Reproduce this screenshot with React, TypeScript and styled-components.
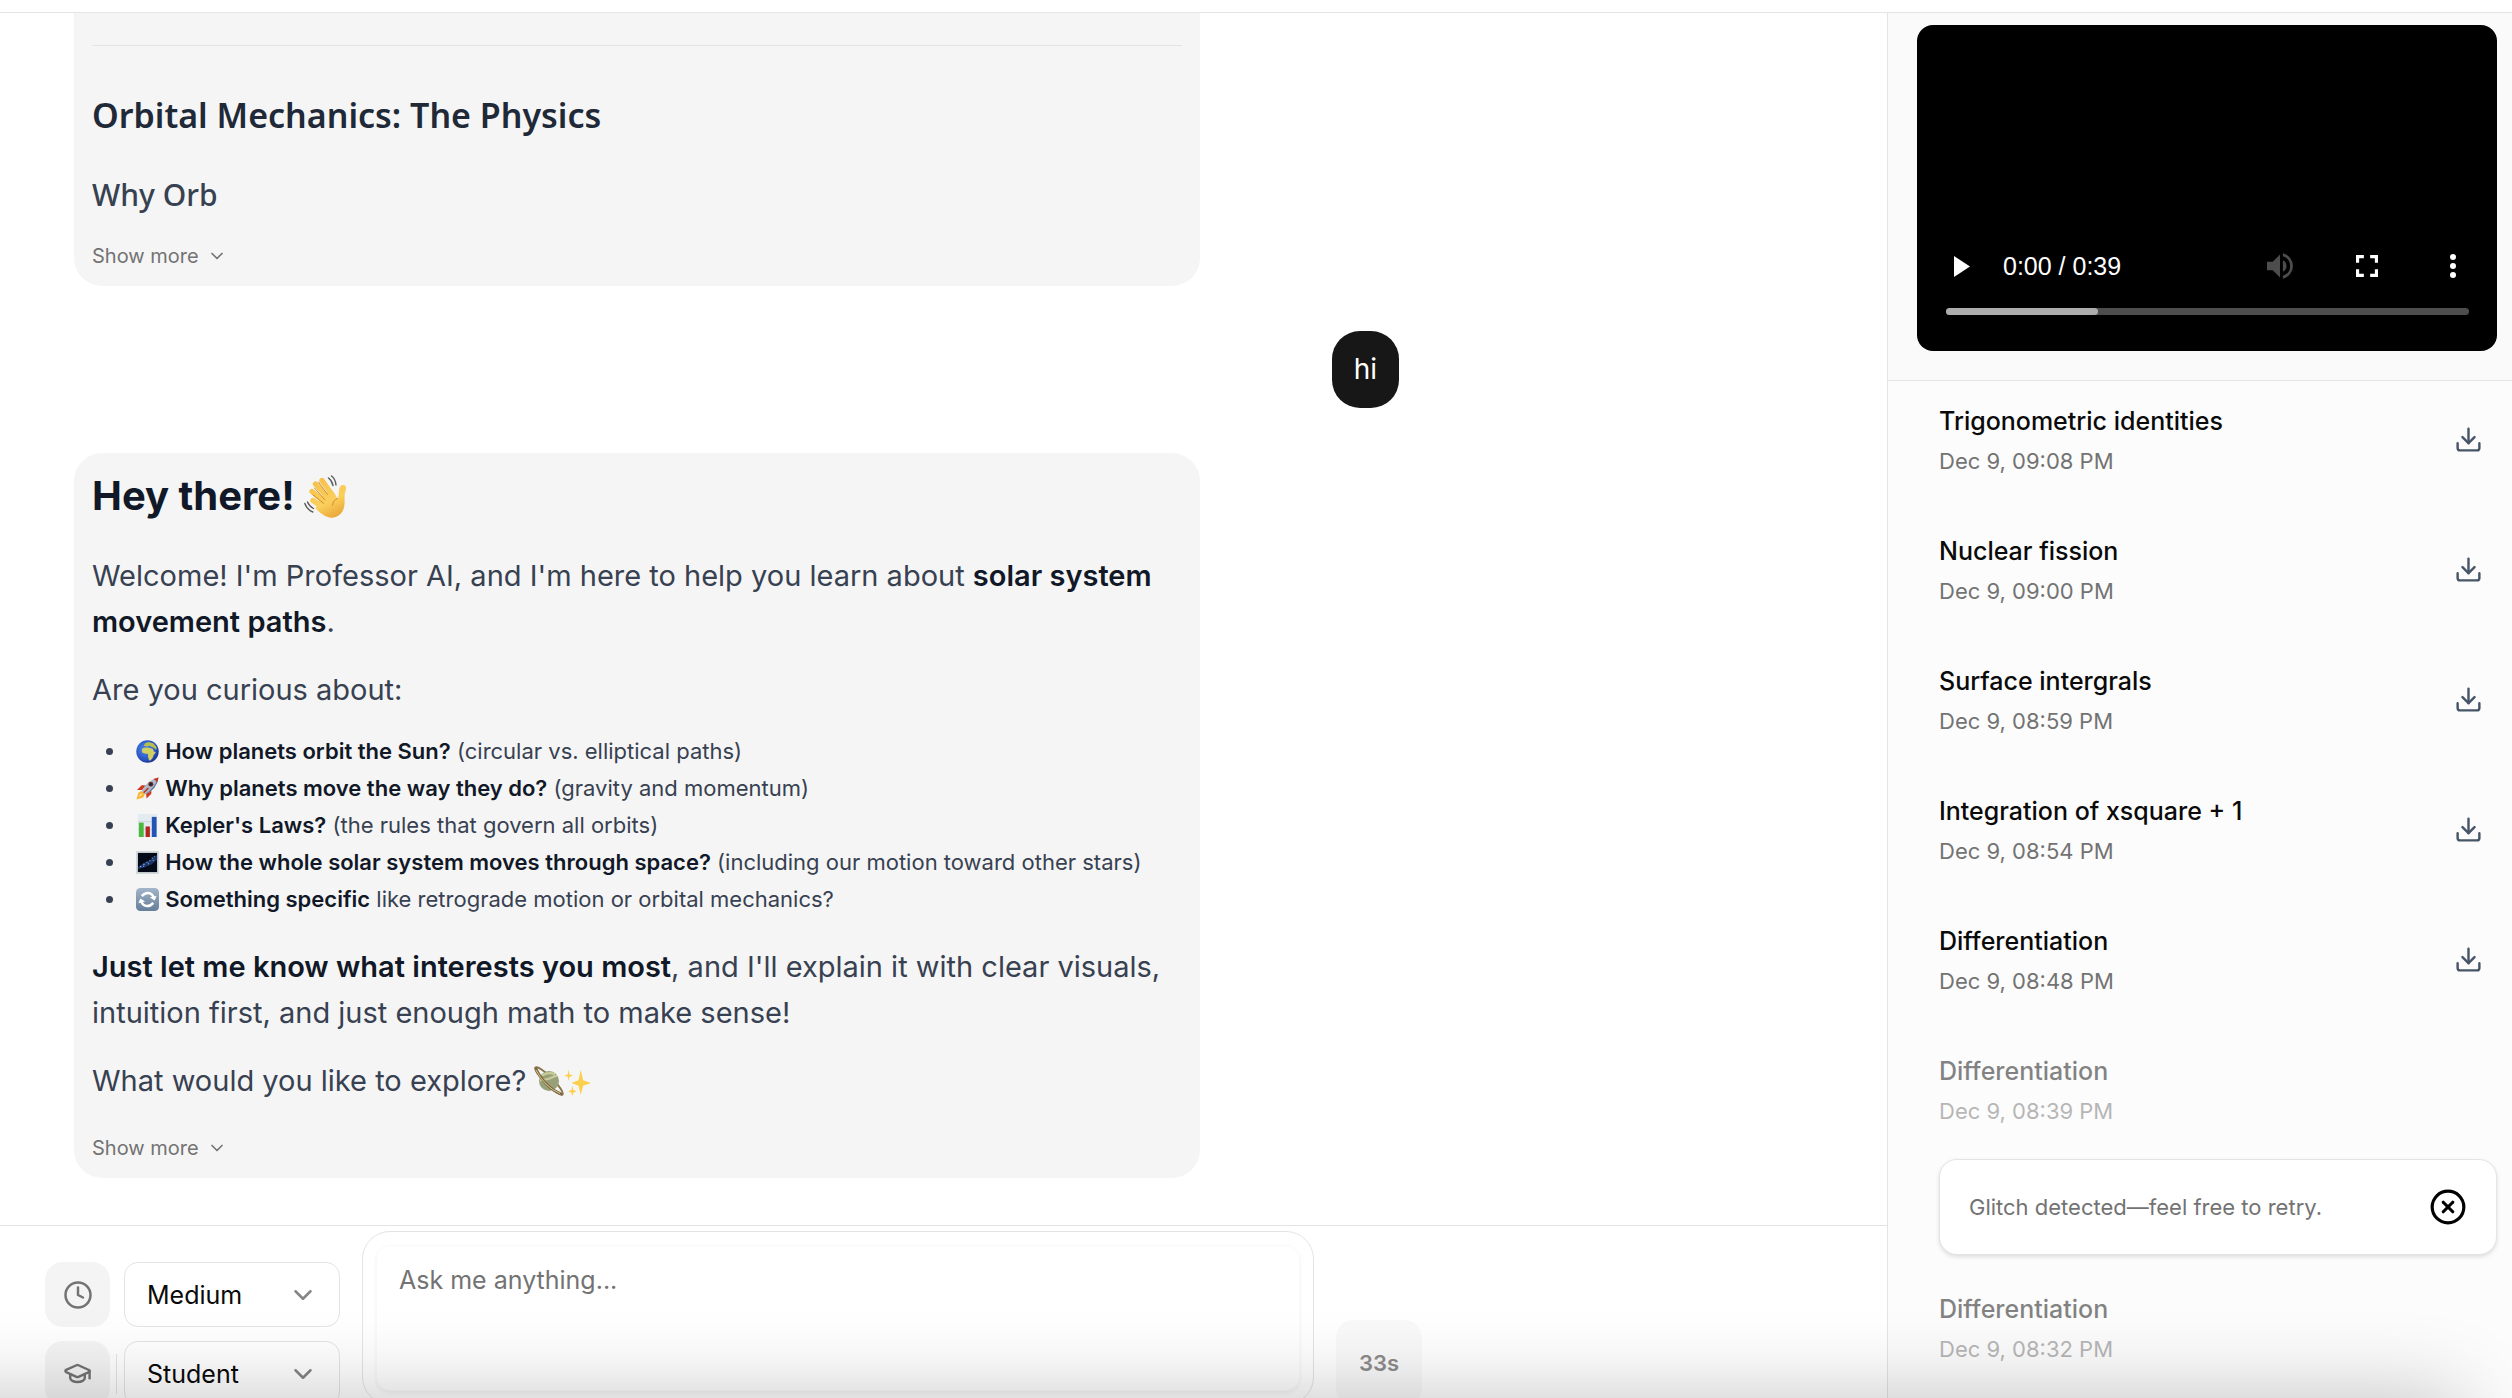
import React from "react";
import styled, { createGlobalStyle } from "styled-components";
import { ChevronDown, CircleX, Clock, Download, GraduationCap } from "lucide-react";

const Global = createGlobalStyle`
  *, *::before, *::after { box-sizing: border-box; }
  body { margin: 0; background: #fff; font-family: Inter, "Liberation Sans", sans-serif; color: #0a0a0a; }
  h1, h2, h3, p, ul { margin: 0; padding: 0; }
  button, select, textarea { font: inherit; }
`;

const Page = styled.div`
  height: 100vh;
  overflow: hidden;
  display: flex;
  flex-direction: column;
`;
const TopBar = styled.header`
  flex: none;
  height: 13px;
  border-bottom: 1px solid #e4e4e4;
`;
const Body = styled.div`
  flex: 1;
  min-height: 0;
  display: flex;
`;
const Main = styled.main`
  flex: 1;
  min-width: 0;
  display: flex;
  flex-direction: column;
`;
const Thread = styled.section`
  flex: 1;
  min-height: 0;
  overflow: hidden;
  display: flex;
  flex-direction: column;
  justify-content: flex-end;
  gap: 45px;
  max-width: 1399px;
  padding: 0 0 47px 74px;
`;
const Answer = styled.article`
  flex: none;
  align-self: flex-start;
  width: 85%;
  padding: 12px 18px 10px;
  border-radius: 28px;
  background: #f5f5f5;
  color: #374151;
`;
const Question = styled.p`
  flex: none;
  align-self: flex-end;
  padding: 16px 22px;
  border-radius: 28px;
  background: #171717;
  color: #fff;
  font-size: 28px;
  line-height: 45px;
`;
const Rule = styled.hr`
  margin: 46px 0;
  border: 0;
  border-top: 1px solid #e4e4e4;
`;
const Title = styled.h1`
  margin-bottom: 26px;
  font-size: 40px;
  line-height: 62px;
  font-weight: 700;
  color: #111827;
`;
const Heading = styled.h2`
  font-family: "Noto Sans", Inter, sans-serif;
  font-size: 34px;
  line-height: 46px;
  font-weight: 600;
  color: #1f2937;
`;
const SubHeading = styled.h3`
  margin-top: 40px;
  font-family: "Noto Sans", Inter, sans-serif;
  font-size: 30px;
  line-height: 34px;
  font-weight: 500;
  color: #374151;
`;
const Text = styled.p`
  font-size: 29px;
  line-height: 46px;
  & + & { margin-top: 22px; }
`;
const Strong = styled.strong`
  font-weight: 600;
  color: #111827;
`;
const Topics = styled.ul`
  margin: 20px 0 26px;
  padding-left: 35px;
  font-size: 22px;
  line-height: 37px;
  & > li { padding-left: 9px; }
`;
const ShowMore = styled.button`
  display: flex;
  align-items: center;
  gap: 8px;
  margin-top: 24px;
  padding: 0;
  border: 0;
  background: none;
  color: #737373;
  font-size: 20px;
  line-height: 40px;
`;
const Emoji = styled.svg<{ $size: number }>`
  width: ${(p) => p.$size}px;
  height: ${(p) => p.$size}px;
  vertical-align: ${(p) => (p.$size > 40 ? -9 : p.$size > 26 ? -5 : -4)}px;
`;

const Composer = styled.form`
  flex: none;
  height: 173px;
  overflow: hidden;
  display: flex;
  gap: 22px;
  align-items: flex-start;
  border-top: 1px solid #e4e4e4;
  padding: 5px 22px 0 45px;
`;
const Options = styled.div`
  flex: none;
  display: flex;
  flex-direction: column;
  gap: 14px;
  padding-top: 31px;
`;
const Option = styled.div`
  display: flex;
  align-items: center;
  width: 295px;
`;
const OptionIcon = styled.label`
  display: grid;
  place-items: center;
  width: 65px;
  height: 65px;
  border-radius: 18px;
  background: #f4f4f4;
  color: #737373;
`;
const Divider = styled.span<{ $shown: boolean }>`
  width: 1px;
  height: 40px;
  margin: 0 7px 0 6px;
  background: ${(p) => (p.$shown ? "#e4e4e4" : "transparent")};
`;
const SelectBox = styled.div`
  flex: 1;
  display: grid;
  align-items: center;
  & > * { grid-area: 1 / 1; }
  & > svg { justify-self: end; margin-right: 22px; color: #858585; pointer-events: none; }
`;
const Select = styled.select`
  appearance: none;
  width: 100%;
  height: 65px;
  padding: 0 56px 0 22px;
  border: 1px solid #e4e4e4;
  border-radius: 14px;
  background: #fff;
  color: #0a0a0a;
  font-size: 25px;
`;
const PromptFrame = styled.div`
  flex: 1;
  max-width: 952px;
  padding: 13px;
  border: 1px solid #e4e4e4;
  border-radius: 28px;
`;
const Prompt = styled.textarea`
  display: block;
  width: 100%;
  height: 146px;
  padding: 18px 22px;
  border: 1px solid #fafafa;
  border-radius: 14px;
  outline: 0;
  resize: none;
  background: transparent;
  box-shadow: 0 2px 4px rgba(0, 0, 0, 0.05);
  font-size: 25px;
  line-height: 32px;
  color: #0a0a0a;
  &::placeholder { color: #737373; opacity: 1; }
`;
const Wait = styled.button`
  flex: none;
  width: 86px;
  height: 86px;
  margin-top: 89px;
  padding: 0;
  border: 0;
  border-radius: 18px;
  background: #f9f9f9;
  color: #8c8c8c;
  font-size: 22px;
  font-weight: 600;
`;

const Sidebar = styled.aside`
  flex: none;
  width: 625px;
  display: flex;
  flex-direction: column;
  overflow: hidden;
  border-left: 1px solid #e4e4e4;
  background: #fcfcfc;
`;
const PlayerArea = styled.section`
  flex: none;
  padding: 12px 15px 29px 29px;
  border-bottom: 1px solid #e4e4e4;
  background: #fafafa;
`;
const Player = styled.div`
  display: flex;
  flex-direction: column;
  justify-content: flex-end;
  height: 326px;
  padding: 0 28px 36px 29px;
  border-radius: 16px;
  background: #000;
  color: #fff;
`;
const Controls = styled.div`
  display: flex;
  align-items: center;
  height: 52px;
  margin-bottom: 16px;
`;
const Time = styled.span`
  flex: 1;
  margin-left: 25px;
  font-family: "Liberation Sans", sans-serif;
  font-size: 25px;
`;
const PlayerButton = styled.button<{ $gap?: number }>`
  display: grid;
  place-items: center;
  width: 32px;
  height: 48px;
  margin-left: ${(p) => p.$gap || 0}px;
  padding: 0;
  border: 0;
  background: none;
  color: inherit;
`;
const Track = styled.div`
  height: 7px;
  border-radius: 4px;
  background: #4d4d4d;
`;
const Buffered = styled.div`
  width: 29%;
  height: 7px;
  border-radius: 4px;
  background: #adadad;
`;
const History = styled.ul`
  flex: 1;
  min-height: 0;
  overflow: hidden;
  list-style: none;
  && { padding: 20px 15px 0 51px; }
  display: flex;
  flex-direction: column;
  gap: 50px;
`;
const Entry = styled.li<{ $off?: boolean }>`
  flex: none;
  display: flex;
  align-items: center;
  justify-content: space-between;
  opacity: ${(p) => (p.$off ? 0.5 : 1)};
`;
const EntryTitle = styled.h3`
  font-size: 25px;
  line-height: 40px;
  font-weight: 500;
`;
const EntryDate = styled.p`
  font-size: 22px;
  line-height: 40px;
  color: #737373;
`;
const IconButton = styled.button`
  display: grid;
  place-items: center;
  margin-right: 14px;
  padding: 0 0 4px;
  border: 0;
  background: none;
  color: #475569;
`;
const Notice = styled.li`
  flex: none;
  display: flex;
  align-items: center;
  justify-content: space-between;
  height: 96px;
  margin: -22px 0 -16px;
  padding: 0 29px;
  border: 1px solid #e4e4e4;
  border-radius: 18px;
  background: #fff;
  box-shadow: 0 2px 4px rgba(0, 0, 0, 0.12);
  color: #737373;
  font-size: 22px;
`;
const Dismiss = styled.button`
  display: grid;
  padding: 0;
  border: 0;
  background: none;
  color: #000;
`;
const DockShade = styled.div`
  position: fixed;
  top: 100%;
  left: -200px;
  right: 50px;
  height: 300px;
  pointer-events: none;
  box-shadow: 0 0 80px rgba(0, 0, 0, 0.24);
`;

const entries = [
  ["Trigonometric identities", "Dec 9, 09:08 PM"],
  ["Nuclear fission", "Dec 9, 09:00 PM"],
  ["Surface intergrals", "Dec 9, 08:59 PM"],
  ["Integration of xsquare + 1", "Dec 9, 08:54 PM"],
  ["Differentiation", "Dec 9, 08:48 PM"],
];

function More() {
  return <ShowMore type="button">Show more <ChevronDown size={20} strokeWidth={2} /></ShowMore>;
}
function PastEntry({ title, date, off }: { title: string; date: string; off?: boolean }) {
  return (
    <Entry $off={off}>
      <div><EntryTitle>{title}</EntryTitle><EntryDate>{date}</EntryDate></div>
      {!off && <IconButton aria-label={"Download " + title}><Download size={29} strokeWidth={2} /></IconButton>}
    </Entry>
  );
}
const Wave = () => (
  <Emoji $size={44} viewBox="0 0 44 44" role="img" aria-label="waving hand">
    <defs>
      <linearGradient id="skin" gradientUnits="userSpaceOnUse" x1="12" y1="4" x2="32" y2="43">
        <stop offset="0" stopColor="#f6c04a" /><stop offset="0.6" stopColor="#fbcf5c" /><stop offset="1" stopColor="#e9a536" />
      </linearGradient>
    </defs>
    <g fill="none" stroke="url(#skin)" strokeWidth="5.4" strokeLinecap="round">
      <path d="M18 5.500 29 21M11.500 9 25 24M8 16.500 22 28M9 25.500 20 33" />
    </g>
    <path d="M17 22 28 15.500q4 5 5.500 8 1.500-3 1.500-8 .5-5.500 4-5.500 3.500 0 3 4-1.500 4-1.500 10 1 10-4 15-5 4.500-11 3.500-6-1-14-9Z" fill="url(#skin)" />
    <path d="m14.500 7 9 12.500m-13-6.500 10.500 12m-12-5 11 8.500M33.500 23.500q-4.500 1.500-5 6.500" stroke="#d1902c" strokeWidth="1" fill="none" strokeLinecap="round" />
    <g fill="none" stroke="#5c5c5c" strokeWidth="1.4" strokeLinecap="round"><path d="M24.500 3q3.500 2.500 4.500 7.500M27.500 1q4 3 4.500 9M.8 28.500q2 6 8 8.500M3.500 27q1.500 4 6 6.500" /></g>
  </Emoji>
);
const Globe = () => (
  <Emoji $size={23} viewBox="0 0 24 24" role="img" aria-label="globe">
    <defs>
      <radialGradient id="sea" cx="0.4" cy="0.4" r="0.65">
        <stop offset="0" stopColor="#4f8be8" /><stop offset="0.7" stopColor="#2a55c4" /><stop offset="1" stopColor="#1a2f8a" />
      </radialGradient>
    </defs>
    <circle cx="12" cy="12" r="11.700" fill="url(#sea)" />
    <path d="M6 9.500 8.500 8l4-.3 3 1 2 .3 1.200 3 2 .8-2.400 3-1 3-2.300 2.700-1.500-.5-1-4 .2-2.500L9 14l-2.600-1Z" fill="#d0cf62" />
    <path d="m8 6 1.500-2.500L13 2l5 1.500 3.500 4-.5 3-2.500-2.500L16 7l-2-1-2 .7Z" fill="#b7bf4f" />
  </Emoji>
);
const Rocket = () => (
  <Emoji $size={23} viewBox="0 0 24 24" role="img" aria-label="rocket">
    <path d="m.5 23.500 2-7 3-2 4 3-2 4Z" fill="#f9b233" /><path d="m3 21 1.500-3.500L7 18Z" fill="#fff0a0" />
    <path d="M1 13.500 6 8.500l4.500 0-4 5Zm10 9 5-5 0-4.500-5.500 4Z" fill="#d2361f" />
    <path d="M6 14.500Q11 3.500 23.500.5q-2 13-14 17.500Z" fill="#a9bccb" /><path d="M9.500 18Q19 12 23.500.5q-2 13-14 17.500Z" fill="#5f7f9d" />
    <path d="M18 2.200 23.500.5 22 6Q21 3.500 18 2.200Z" fill="#c7321f" /><circle cx="15.500" cy="7.500" r="2.600" fill="#8b2a22" /><circle cx="15.500" cy="7.500" r="1.600" fill="#1d2b40" />
    <path d="m8 16.500 5-5" stroke="#c7321f" strokeWidth="1.600" />
  </Emoji>
);
const Chart = () => (
  <Emoji $size={23} viewBox="0 0 24 24" role="img" aria-label="bar chart">
    <path d="M2 0h20v24H2Z" fill="#e3ebf1" /><path d="M2 8h20M2 16h20" stroke="#c9d6df" strokeWidth="1" />
    <path d="M3 9h5v15H3Z" fill="#4ab838" /><path d="M10 13h4.500v11H10Z" fill="#b3261f" /><path d="M16.500 3h5v21h-5Z" fill="#2455b5" />
  </Emoji>
);
const Galaxy = () => (
  <Emoji $size={23} viewBox="0 0 24 24" role="img" aria-label="milky way">
    <path d="M0 0h24v24H0Z" fill="#d3dadb" /><path d="M2 2h20v20H2Z" fill="#050a18" />
    <path d="M2 17 8 12.500 14 10 22 4v5l-6 5-7 3-7 2Z" fill="#1c3566" />
    <path d="m4 16.500 1.500-.5m2-2 1.500 0m2-2.500 1 .5m2-2 1 0m1.500-2.500 1 0m1-1.500 1 0m-2 4 1-.5m-6 4 1-.5m-6 3 1 0" stroke="#8ea5e6" strokeWidth="1.200" />
  </Emoji>
);
const Refresh = () => (
  <Emoji $size={23} viewBox="0 0 24 24" role="img" aria-label="refresh">
    <defs><linearGradient id="key" x1="0" y1="0" x2="0" y2="1"><stop offset="0" stopColor="#a3b5c9" /><stop offset="1" stopColor="#647d99" /></linearGradient></defs>
    <rect width="24" height="24" rx="4.500" fill="url(#key)" />
    <path d="M6 8.500Q9 5 12.500 5.200 17 5.500 18.500 10M18 15.500Q15 19 11.500 18.800 7 18.500 5.500 14" stroke="#fff" strokeWidth="2.600" fill="none" />
    <path d="m21.500 8-2 5-5-3ZM2.500 16l2-5 5 3Z" fill="#fff" />
  </Emoji>
);
const Saturn = () => (
  <Emoji $size={30} viewBox="0 0 30 30" role="img" aria-label="ringed planet">
    <ellipse cx="15" cy="15" rx="19" ry="4" transform="rotate(45 15 15)" fill="none" stroke="#8a754b" strokeWidth="2" />
    <circle cx="15" cy="15" r="10" fill="#98a07a" /><path d="M8 9.500q7-4 13-1M6 14.500q9-1 17-5" stroke="#c9cb98" strokeWidth="2.200" fill="none" />
    <path d="M1.600 1.600Q5 10 12 17.500T28.400 28.400" fill="none" stroke="#7d6a42" strokeWidth="2.600" /><path d="M2 4Q6 12 12 18t14 9.500" fill="none" stroke="#d8c78f" strokeWidth="1" />
  </Emoji>
);
const Sparkles = () => (
  <Emoji $size={28} viewBox="0 0 30 30" role="img" aria-label="sparkles">
    <path d="m18 2 2.500 11 8.500 3-8.500 3L18 29l-2.500-10L8 16l7.500-3ZM5 2l1 5 4 1-4 1.500L5 14 4 9.500 0 8l4-1Zm4 17 1 4.500 3.500 1.500-3.500 1.500L9 30l-1-3.500L4.500 25 8 23.500Z" fill="#fbd04e" />
  </Emoji>
);

const topics: [React.FC, string, string][] = [
  [Globe, "How planets orbit the Sun?", "(circular vs. elliptical paths)"],
  [Rocket, "Why planets move the way they do?", "(gravity and momentum)"],
  [Chart, "Kepler's Laws?", "(the rules that govern all orbits)"],
  [Galaxy, "How the whole solar system moves through space?", "(including our motion toward other stars)"],
  [Refresh, "Something specific", "like retrograde motion or orbital mechanics?"],
];

export default function App() {
  return (
    <Page>
      <Global />
      <TopBar />
      <Body>
        <Main>
          <Thread>
            <Answer>
              <Rule />
              <Heading>Orbital Mechanics: The Physics</Heading>
              <SubHeading>Why Orb</SubHeading>
              <More />
            </Answer>
            <Question>hi</Question>
            <Answer>
              <Title>Hey there! <Wave /></Title>
              <Text>Welcome! I'm Professor AI, and I'm here to help you learn about <Strong>solar system movement paths</Strong>.</Text>
              <Text>Are you curious about:</Text>
              <Topics>
                {topics.map(([Icon, name, note]) => (
                  <li key={name}><Icon /> <Strong>{name}</Strong> {note}</li>
                ))}
              </Topics>
              <Text><Strong>Just let me know what interests you most</Strong>, and I'll explain it with clear visuals, intuition first, and just enough math to make sense!</Text>
              <Text>What would you like to explore? <Saturn /><Sparkles /></Text>
              <More />
            </Answer>
          </Thread>
          <Composer>
            <Options>
              <Option>
                <OptionIcon htmlFor="length" aria-label="Length"><Clock size={30} /></OptionIcon>
                <Divider $shown={false} />
                <SelectBox><Select id="length"><option>Medium</option></Select><ChevronDown size={30} strokeWidth={2} /></SelectBox>
              </Option>
              <Option>
                <OptionIcon htmlFor="level" aria-label="Level"><GraduationCap size={29} /></OptionIcon>
                <Divider $shown />
                <SelectBox><Select id="level"><option>Student</option></Select><ChevronDown size={30} strokeWidth={2} /></SelectBox>
              </Option>
            </Options>
            <PromptFrame><Prompt aria-label="Message" placeholder="Ask me anything..." /></PromptFrame>
            <Wait type="button">33s</Wait>
          </Composer>
        </Main>
        <Sidebar>
          <PlayerArea>
            <Player>
              <Controls>
                <PlayerButton aria-label="Play"><svg width="16" height="21" viewBox="0 0 16 21"><path d="M0 0 16 10.500 0 21Z" fill="#fff" /></svg></PlayerButton>
                <Time>0:00 / 0:39</Time>
                <PlayerButton aria-label="Mute"><svg width="28" height="26" viewBox="3 3 18 18" fill="#4d4d4d"><path d="M3 9v6h4l5 5V4L7 9H3zm13.500 3A4.500 4.500 0 0 0 14 7.970v8.050A4.500 4.500 0 0 0 16.500 12zM14 3.230v2.060a7 7 0 0 1 0 13.420v2.060a9 9 0 0 0 0-17.540z" /></svg></PlayerButton>
                <PlayerButton aria-label="Full screen" $gap={55}><svg width="22" height="22" viewBox="5 5 14 14" fill="#fff"><path d="M7 14H5v5h5v-2H7v-3zm-2-4h2V7h3V5H5v5zm12 7h-3v2h5v-5h-2v3zM14 5v2h3v3h2V5h-5z" /></svg></PlayerButton>
                <PlayerButton aria-label="More options" $gap={54}><svg width="6" height="24" viewBox="0 0 6 24" fill="#fff"><circle cx="3" cy="3" r="3" /><circle cx="3" cy="12" r="3" /><circle cx="3" cy="21" r="3" /></svg></PlayerButton>
              </Controls>
              <Track><Buffered /></Track>
            </Player>
          </PlayerArea>
          <History>
            {entries.map(([title, date]) => <PastEntry key={date} title={title} date={date} />)}
            <PastEntry title="Differentiation" date="Dec 9, 08:39 PM" off />
            <Notice>Glitch detected—feel free to retry.<Dismiss aria-label="Dismiss"><CircleX size={38} /></Dismiss></Notice>
            <PastEntry title="Differentiation" date="Dec 9, 08:32 PM" off />
          </History>
        </Sidebar>
      </Body>
      <DockShade />
    </Page>
  );
}
